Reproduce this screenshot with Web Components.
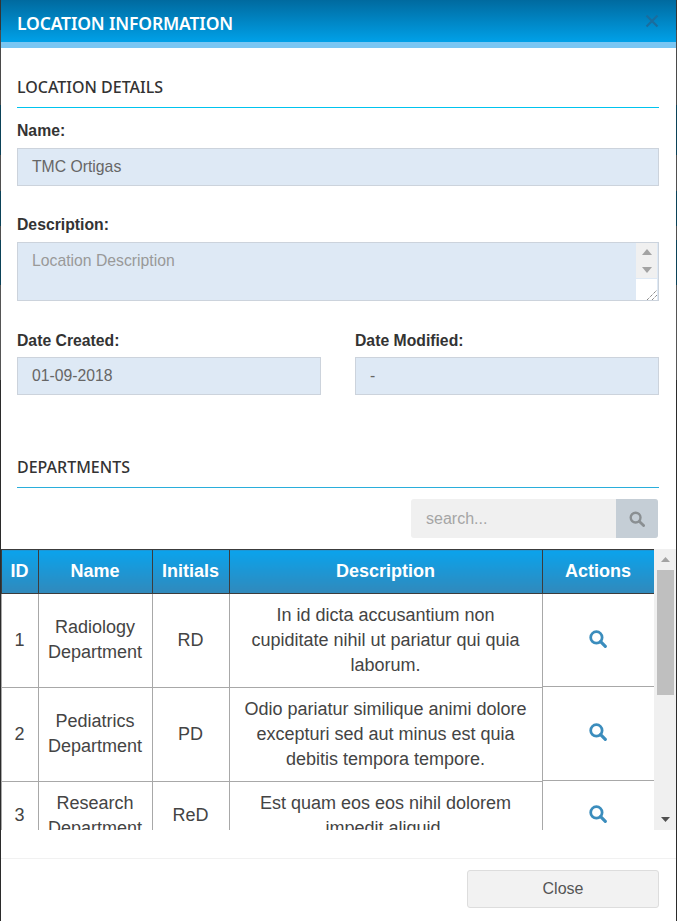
<!DOCTYPE html>
<html>
<head>
<meta charset="utf-8">
<title>Location Information</title>
<style>
html { height: 100%; background: #2b2b2b linear-gradient(#333 0 30px, #4a4a4a 30px 105px, #0b4258 105px 155px, #4f4f4f 155px 191px, #0b4258 191px 226px, #4f4f4f 226px 240px, #0b4258 240px 285px, #555 285px 380px, #2b2b2b 380px) no-repeat; }
body { margin: 0; height: 100%; overflow: hidden; font-family: "Liberation Sans", Arial, sans-serif; color: #333; }
</style>
</head>
<body>
<template id="field-tpl">
    <style>
        :host { display: block; min-width: 0; }
        label { display: block; font: bold 15.75px/22px "Liberation Sans", sans-serif; color: #333; margin-bottom: var(--gap, 6px); }
        .box { box-sizing: border-box; height: 38px; padding: 0 14px; line-height: 35px; font-size: 15.75px; color: #666;
            background: #dee9f5; border: 1px solid #ccd3dc; }
    </style>
    <label></label>
    <div class="box"></div>
</template>

<script>
class ModalHeader extends HTMLElement {
    constructor() {
        super();
        this.shadow = this.attachShadow({mode: 'open'});
        this.shadow.innerHTML = `<style>
            :host { display: flex; align-items: center; justify-content: space-between; box-sizing: border-box;
                height: 49px; padding: 0 17px 0 16px; border-bottom: 6px solid #79c6f3;
                background: linear-gradient(#006a9f, #00a2ea) no-repeat; background-size: 100% 43px; }
            h1 { margin: 3px 0 0; font: 600 17.5px/24px "Noto Sans", sans-serif; letter-spacing: -.15px; color: #fff; }
            svg { display: block; }
        </style>
        <h1><slot></slot></h1>
        <svg width="14" height="14" viewBox="0 0 14 14"><path d="M1.5 1.5 12.5 12.5M12.5 1.5 1.5 12.5" stroke="#1a6d9e" stroke-width="2.2" fill="none"/></svg>`;
    }
}

class SectionTitle extends HTMLElement {
    constructor() {
        super();
        this.shadow = this.attachShadow({mode: 'open'});
        this.shadow.innerHTML = `<style>
            :host { display: block; font: 500 16px/24px "Noto Sans", sans-serif; color: #333; }
            .text { height: 31px; }
            .rule { height: 1px; margin-top: 1px; background: #00c3ee; }
            :host([muted]) .rule { background: #2aaedb; }
        </style>
        <div class="text"><slot></slot></div>
        <div class="rule"></div>`;
    }
}

class FieldBox extends HTMLElement {
    constructor() {
        super();
        this.shadow = this.attachShadow({mode: 'open'});
        this.shadow.appendChild(document.getElementById('field-tpl').content.cloneNode(true));
    }
    connectedCallback() {
        this.shadow.querySelector('label').textContent = this.getAttribute('label');
        this.shadow.querySelector('.box').textContent = this.getAttribute('value');
    }
}

class TextArea extends HTMLElement {
    constructor() {
        super();
        this.shadow = this.attachShadow({mode: 'open'});
        this.shadow.innerHTML = `<style>
            :host { display: block; }
            label { display: block; font: bold 15.75px/22px "Liberation Sans", sans-serif; color: #333; margin-bottom: 6px; }
            .box { box-sizing: border-box; height: 59px; display: flex; background: #dee9f5; border: 1px solid #ccd3dc; }
            .text { flex: 1; padding: 0 14px; line-height: 35px; height: 35px; font-size: 15.75px; color: #999; }
            .bar { width: 21px; margin-right: 1px; display: flex; flex-direction: column; background: #f0f0f0; }
            .arrows { height: 35px; display: flex; flex-direction: column; align-items: center; justify-content: space-between; padding: 6px 0 5px; box-sizing: border-box; }
            .corner { flex: 1; background: #fff; border-top: 1px solid #dee9f5; display: flex; align-items: flex-end; justify-content: flex-end; }
            svg { display: block; }
        </style>
        <label><slot name="label"></slot></label>
        <div class="box">
            <div class="text"><slot></slot></div>
            <div class="bar">
                <div class="arrows">
                    <svg width="10" height="6"><path d="M5 0 10 6H0Z" fill="#a3a3a3"/></svg>
                    <svg width="10" height="6"><path d="M0 0H10L5 6Z" fill="#a3a3a3"/></svg>
                </div>
                <div class="corner"><svg width="12" height="12"><path d="M2 12 12 2M7 12 12 7" stroke="#555" stroke-dasharray="1 1" fill="none"/></svg></div>
            </div>
        </div>`;
    }
}

class SearchBox extends HTMLElement {
    constructor() {
        super();
        this.shadow = this.attachShadow({mode: 'open'});
        this.shadow.innerHTML = `<style>
            :host { display: flex; width: 247px; height: 39px; border-radius: 3px; overflow: hidden; background: #f0f0f0; }
            .q { flex: 1; padding-left: 15px; font-size: 16px; line-height: 40px; color: #a5a5a5; }
            .btn { width: 42px; background: #c5ced6; display: flex; align-items: center; justify-content: center; }
        </style>
        <div class="q">search...</div>
        <div class="btn"><svg width="16" height="16" viewBox="0 0 16 16"><circle cx="6.6" cy="6.6" r="4.9" fill="none" stroke="#8a8f92" stroke-width="2.4"/><path d="M10.4 10.4 14.6 14.6" stroke="#8a8f92" stroke-width="2.8" stroke-linecap="round"/></svg></div>`;
    }
}

const ROWS = [
    ['1', 'Radiology Department', 'RD', 'In id dicta accusantium non cupiditate nihil ut pariatur qui quia laborum.'],
    ['2', 'Pediatrics Department', 'PD', 'Odio pariatur similique animi dolore excepturi sed aut minus est quia debitis tempora tempore.'],
    ['3', 'Research Department', 'ReD', 'Est quam eos eos nihil dolorem impedit aliquid.']
];
const LENS = `<svg width="18" height="18" viewBox="0 0 17 17"><circle cx="7" cy="7" r="5.4" fill="none" stroke="#3b8dbd" stroke-width="2.6"/><path d="M11 11 15.4 15.4" stroke="#3b8dbd" stroke-width="3" stroke-linecap="round"/></svg>`;

class DeptTable extends HTMLElement {
    constructor() {
        super();
        this.shadow = this.attachShadow({mode: 'open'});
        const rows = ROWS.map(r => `<tr>
            <td>${r[0]}</td><td>${r[1]}</td><td>${r[2]}</td><td>${r[3]}</td><td class="act">${LENS}</td></tr>`).join('');
        this.shadow.innerHTML = `<style>
            :host { display: flex; height: 281px; overflow: hidden; }
            .wrap { width: 654px; overflow: hidden; }
            table { width: 654px; table-layout: fixed; border-collapse: collapse; font-size: 18px; color: #444; }
            th { height: 43px; padding: 0 1px 0 0; font: bold 18px "Liberation Sans", sans-serif; color: #fff; border: 1px solid #3c3c3c;
                background: linear-gradient(#0aa3ec, #3189bb); }
            th:last-child { padding-right: 2px; }
            td { padding: 8.7px 7px 8.7px 6px; text-align: center; line-height: 25.2px; border: 1px solid #a8a8a8; }
            .act { position: relative; padding-right: 8px; border-bottom: none; border-top: none; }
            .act::after { content: ""; position: absolute; left: 0; right: 0; bottom: 0; height: 1px; background: #a8a8a8; }
            .act svg { display: block; margin: 0 auto 4px; }
            .bar { width: 22px; background: #f0f0f0; display: flex; flex-direction: column; align-items: center; }
            .up, .down { height: 21px; display: flex; align-items: center; justify-content: center; flex: none; }
            .thumb { width: 17px; height: 125px; background: #bfbfbf; }
            .sp { flex: 1; }
        </style>
        <div class="wrap"><table>
            <colgroup><col style="width:37px"><col style="width:114px"><col style="width:77px"><col style="width:313px"><col style="width:113px"></colgroup>
            <thead><tr><th>ID</th><th>Name</th><th>Initials</th><th>Description</th><th>Actions</th></tr></thead>
            <tbody>${rows}</tbody>
        </table></div>
        <div class="bar">
            <div class="up"><svg width="9" height="5"><path d="M4.5 0 9 5H0Z" fill="#a3a3a3"/></svg></div>
            <div class="thumb"></div><div class="sp"></div>
            <div class="down"><svg width="9" height="5"><path d="M0 0H9L4.5 5Z" fill="#505050"/></svg></div>
        </div>`;
    }
}

class ModalFooter extends HTMLElement {
    constructor() {
        super();
        this.shadow = this.attachShadow({mode: 'open'});
        this.shadow.innerHTML = `<style>
            :host { display: flex; justify-content: flex-end; box-sizing: border-box; height: 63px; padding: 11px 17px 0; border-top: 1px solid #f1f1f1; }
            button { box-sizing: border-box; width: 192px; height: 38px; padding: 0; font: 16px "Liberation Sans", sans-serif; color: #555;
                background: #f2f2f2; border: 1px solid #ddd; border-radius: 3px; }
        </style>
        <button><slot></slot></button>`;
    }
}

class LocationModal extends HTMLElement {
    constructor() {
        super();
        this.shadow = this.attachShadow({mode: 'open'});
        this.shadow.innerHTML = `<style>
            :host { display: flex; flex-direction: column; box-sizing: border-box; width: 675px; height: 921px; margin-left: 1px; background: #fff; }
            .body { flex: 1; display: flex; flex-direction: column; }
            .pad { padding: 27px 17px 0 16px; display: flex; flex-direction: column; }
            .grid { display: grid; grid-template-columns: 1fr 1fr; gap: 34px; margin-top: 29px; --gap: 5px; }
            .tools { display: flex; justify-content: flex-end; padding: 11px 18px 11px 0; }
        </style>
        <modal-header>LOCATION INFORMATION</modal-header>
        <div class="body">
            <div class="pad">
                <section-title>LOCATION DETAILS</section-title>
                <field-box label="Name:" value="TMC Ortigas" style="margin-top:12px"></field-box>
                <text-area style="margin-top:28px"><span slot="label">Description:</span>Location Description</text-area>
                <div class="grid">
                    <field-box label="Date Created:" value="01-09-2018"></field-box>
                    <field-box label="Date Modified:" value="-"></field-box>
                </div>
                <section-title muted style="margin-top:60px">DEPARTMENTS</section-title>
            </div>
            <div class="tools"><search-box></search-box></div>
            <dept-table></dept-table>
            <div style="height:28px"></div>
            <modal-footer>Close</modal-footer>
        </div>`;
    }
}

customElements.define('modal-header', ModalHeader);
customElements.define('section-title', SectionTitle);
customElements.define('field-box', FieldBox);
customElements.define('text-area', TextArea);
customElements.define('search-box', SearchBox);
customElements.define('dept-table', DeptTable);
customElements.define('modal-footer', ModalFooter);
customElements.define('location-modal', LocationModal);
</script>
<location-modal></location-modal>
</body>
</html>
